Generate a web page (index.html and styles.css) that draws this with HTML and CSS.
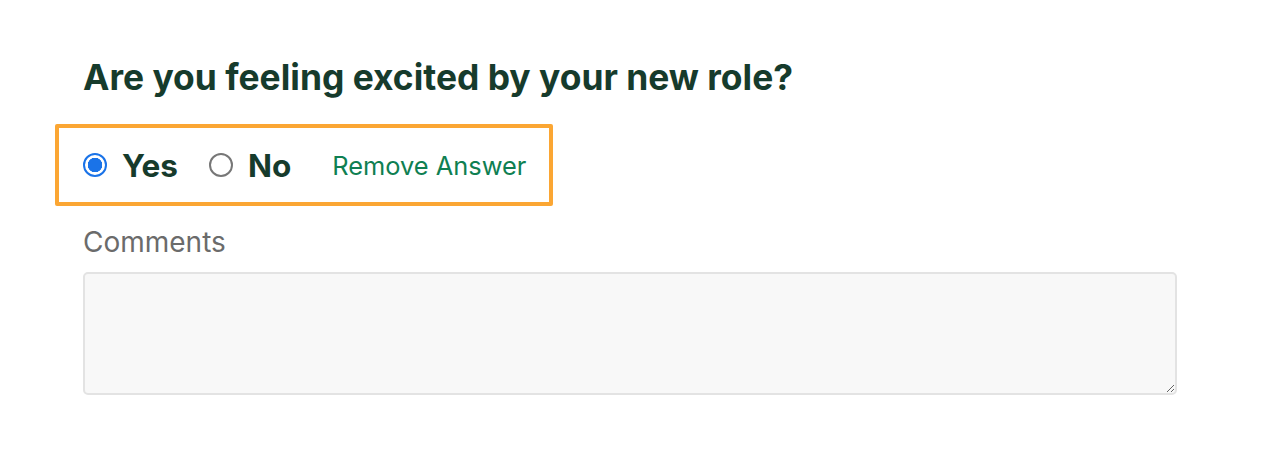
FILE: index.html
```html
<!DOCTYPE html>
<html>
<head>
<meta charset="utf-8">
<link rel="stylesheet" href="styles.css">
</head>
<body>
<div class="question">
  <h2 class="title">Are you feeling excited by your new role?</h2>
  <div class="answer-box">
    <label class="option"><span class="radio checked"></span><span class="opt-text">Yes</span></label>
    <label class="option"><span class="radio"></span><span class="opt-text">No</span></label>
    <a class="remove">Remove Answer</a>
  </div>
  <div class="comments-label">Comments</div>
  <textarea class="comments"></textarea>
</div>
</body>
</html>
```
FILE: styles.css
```css
html, body { margin: 0; padding: 0; background: #fff; }
body { font-family: "Inter", "Liberation Sans", sans-serif; }
.question { padding: 56px 0 0 83px; width: 1094px; }
.title {
  margin: 0;
  font-size: 35.4px;
  line-height: 44px;
  font-weight: 700;
  color: #163b2c;
  letter-spacing: 0;
}
.answer-box {
  margin: 24px 0 0 -28px;
  width: 498px;
  height: 82px;
  box-sizing: border-box;
  border: 4px solid #fba633;
  border-radius: 2px;
  display: flex;
  align-items: center;
  padding-left: 24px;
}
.option { display: flex; align-items: center; margin-right: 31px; }
.radio {
  width: 24px; height: 24px; box-sizing: border-box;
  border-radius: 50%; border: 2px solid #777; display: inline-block;
  margin-right: 15px;
}
.radio.checked { background: radial-gradient(circle, #1a73e8 0 7px, #fff 7.5px); border: 2px solid #1a73e8; }
.opt-text { font-size: 31.5px; font-weight: 700; color: #163b2c; }
.option + .option { margin-right: 41px; }
.remove { font-size: 25.4px; color: #0f7f52; }
.comments-label { margin-top: 20px; font-size: 28px; color: #6b6b6b; line-height: 32px; }
.comments {
  display: block;
  margin-top: 14px;
  width: 1094px; height: 123px; box-sizing: border-box;
  border: 2px solid #e3e3e3; border-radius: 5px; background: #f8f8f8;
  resize: vertical;
}
```
